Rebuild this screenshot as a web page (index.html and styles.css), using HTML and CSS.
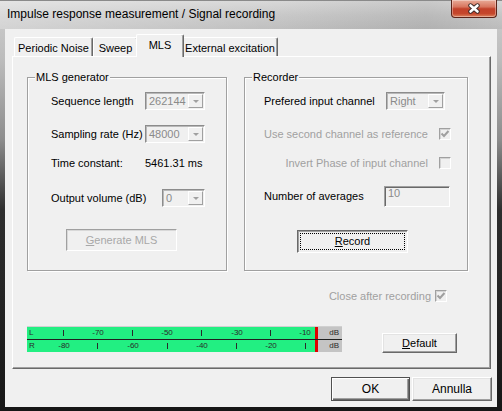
FILE: index.html
```html
<!DOCTYPE html>
<html>
<head>
<meta charset="utf-8">
<title>Impulse response measurement / Signal recording</title>
<link rel="stylesheet" href="styles.css">
</head>
<body>
<div class="window">
  <div class="titlebar">
    <span class="title">Impulse response measurement / Signal recording</span>
    <div class="close">
      <svg width="14" height="11" viewBox="0 0 14 11">
        <path d="M3.5 2.5 L10.5 8.5 M10.5 2.5 L3.5 8.5" stroke="#3a2a28" stroke-width="4.4" stroke-linecap="round" fill="none"/>
        <path d="M3.5 2.5 L10.5 8.5 M10.5 2.5 L3.5 8.5" stroke="#ffffff" stroke-width="2.6" stroke-linecap="round" fill="none"/>
      </svg>
    </div>
  </div>
  <div class="client">
    <div class="tabctl">
      <div class="tabs">
        <div class="tab t1">Periodic Noise</div>
        <div class="tab t2">Sweep</div>
        <div class="tab t3 sel">MLS</div>
        <div class="tab t4">External excitation</div>
      </div>
      <div class="panel">
        <div class="groups">
          <div class="group gen">
            <span class="legend">MLS generator</span>
            <div class="grid gen-grid">
              <div class="row">
                <span class="lbl w94">Sequence length</span>
                <div class="combo w60"><span class="val">262144</span><span class="arrow"></span></div>
              </div>
              <div class="row">
                <span class="lbl w94">Sampling rate (Hz)</span>
                <div class="combo w60"><span class="val">48000</span><span class="arrow"></span></div>
              </div>
              <div class="row">
                <span class="lbl w94">Time constant:</span>
                <span class="lbl">5461.31 ms</span>
              </div>
              <div class="row">
                <span class="lbl w111">Output volume (dB)</span>
                <div class="combo w43"><span class="val">0</span><span class="arrow"></span></div>
              </div>
              <div class="row">
                <div class="btn btn-gen disabled"><span><u>G</u>enerate MLS</span></div>
              </div>
            </div>
          </div>
          <div class="group rec">
            <span class="legend">Recorder</span>
            <div class="grid rec-grid">
              <div class="row">
                <span class="lbl w122">Prefered input channel</span>
                <div class="combo w59"><span class="val">Right</span><span class="arrow"></span></div>
              </div>
              <div class="row end">
                <span class="lbl dis">Use second channel as reference</span>
                <span class="chk">
                  <svg width="10" height="10" viewBox="0 0 10 10"><path d="M1.5 4.5 L4 7 L8.5 2" stroke="#a0a0a0" stroke-width="2" fill="none"/></svg>
                </span>
              </div>
              <div class="row end">
                <span class="lbl dis">Invert Phase of input channel</span>
                <span class="chk"></span>
              </div>
              <div class="row tall">
                <span class="lbl w120">Number of averages</span>
                <div class="edit"><span>10</span></div>
              </div>
              <div class="row">
                <div class="btn btn-rec"><span class="focus"><u>R</u>ecord</span></div>
              </div>
            </div>
          </div>
        </div>
        <div class="closerow">
          <span class="lbl dis">Close after recording</span>
          <span class="chk">
            <svg width="10" height="10" viewBox="0 0 10 10"><path d="M1.5 4.5 L4 7 L8.5 2" stroke="#a0a0a0" stroke-width="2" fill="none"/></svg>
          </span>
        </div>
        <div class="meterrow">
          <div class="meter">
            <div class="mrow">
              <div class="scale">
                <span class="ch">L</span>
                <i class="tick" style="left:36px"></i>
                <span class="num" style="left:71px">-70</span>
                <i class="tick" style="left:105px"></i>
                <span class="num" style="left:140px">-50</span>
                <i class="tick" style="left:174px"></i>
                <span class="num" style="left:210px">-30</span>
                <i class="tick" style="left:243px"></i>
                <span class="num" style="left:278px">-10</span>
              </div>
              <div class="peak"></div>
              <div class="unit">dB</div>
            </div>
            <div class="msep"></div>
            <div class="mrow">
              <div class="scale">
                <span class="ch">R</span>
                <span class="num" style="left:37px">-80</span>
                <i class="tick" style="left:70px"></i>
                <span class="num" style="left:106px">-60</span>
                <i class="tick" style="left:140px"></i>
                <span class="num" style="left:175px">-40</span>
                <i class="tick" style="left:209px"></i>
                <span class="num" style="left:244px">-20</span>
                <i class="tick" style="left:278px"></i>
              </div>
              <div class="peak"></div>
              <div class="unit">dB</div>
            </div>
          </div>
          <div class="btn btn-def"><span><u>D</u>efault</span></div>
        </div>
      </div>
    </div>
    <div class="dlgbtns">
      <div class="btn btn-ok"><span>OK</span></div>
      <div class="btn btn-cancel"><span>Annulla</span></div>
    </div>
  </div>
</div>
</body>
</html>
```
FILE: styles.css
```css
* { box-sizing: border-box; }
html, body { margin: 0; padding: 0; }
body {
  width: 502px;
  height: 411px;
  overflow: hidden;
  background: #1a1a1a;
  font-family: "Liberation Sans", Arial, sans-serif;
  font-size: 11px;
  color: #000;
}
.window {
  width: 502px;
  height: 411px;
  display: flex;
  flex-direction: column;
  background: linear-gradient(to bottom, #cfcfcf 0, #bcbcbc 60px, #8c8c8c 140px, #2e2e2e 210px, #161616 411px);
}
.titlebar {
  height: 29px;
  display: flex;
  justify-content: space-between;
  align-items: flex-start;
  background:
    linear-gradient(to right, rgba(255,255,255,0.35) 0, rgba(255,255,255,0.05) 55%, rgba(0,0,0,0.06) 85%, rgba(255,255,255,0) 100%),
    linear-gradient(to bottom, #d6d6d6 0, #c6c6c6 50%, #bcbcbc 100%);
  border-top: 1px solid #8a8a8a;
}
.title {
  padding-left: 7px;
  line-height: 27px;
  font-size: 12px;
  color: #000;
}
.close {
  width: 46px;
  height: 18px;
  margin-top: -1px;
  margin-right: 5px;
  border: 1px solid #5b2419;
  border-top: none;
  border-radius: 0 0 4px 4px;
  background: linear-gradient(to bottom, #e9ab98 0, #d8765f 40%, #c2412a 52%, #c5472c 80%, #dc8560 100%);
  box-shadow: inset 0 0 0 1px rgba(255,255,255,0.35);
  display: flex;
  align-items: center;
  justify-content: center;
}
.client {
  height: 378px;
  margin: 0 5px 0 5px;
  background: #f0f0f0;
  display: flex;
  flex-direction: column;
}
.tabctl {
  margin: 5px 0 0 7px;
  width: 479px;
}
.tabs {
  display: flex;
  align-items: flex-end;
  height: 22px;
  padding-left: 2px;
  position: relative;
  z-index: 1;
}
.tab {
  height: 19px;
  background: #f0f0f0;
  border: 1px solid;
  border-color: #ffffff #696969 transparent #ffffff;
  border-bottom: none;
  border-radius: 2px 2px 0 0;
  box-shadow: inset -1px 0 0 #a0a0a0;
  display: flex;
  align-items: center;
  justify-content: center;
  padding-top: 1px;
}
.t1 { width: 79px; }
.t2 { width: 45px; }
.t3 { width: 48px; }
.t4 { width: 96px; }
.tab.sel {
  height: 23px;
  margin: 0 -2px -1px -2px;
  position: relative;
  z-index: 2;
  padding-top: 0;
  padding-bottom: 3px;
}
.panel {
  height: 313px;
  border: 1px solid;
  border-color: #ffffff #696969 #696969 #ffffff;
  box-shadow: inset -1px -1px 0 #a0a0a0;
  padding: 20px 0 0 14px;
}
.groups {
  display: flex;
  gap: 17px;
}
.group {
  height: 194px;
  border: 1px solid #a0a0a0;
  box-shadow: 1px 1px 0 #ffffff, inset 1px 1px 0 #ffffff;
}
.gen { width: 200px; padding-left: 23px; }
.rec { width: 224px; padding-left: 19px; }
.legend {
  display: block;
  width: fit-content;
  height: 14px;
  line-height: 14px;
  margin: -8px 0 0 -16px;
  padding: 0 1px;
  background: #f0f0f0;
}
.rec .legend { margin-left: -12px; }
.grid {
  display: grid;
  margin-top: 8px;
}
.gen-grid { grid-template-rows: 33px 29px 35px 42px auto; }
.rec-grid { grid-template-rows: 33px 29px 32px 46px auto; }
.row {
  height: 18px;
  display: flex;
  align-items: center;
}
.row.tall { height: 21px; }
.row.end { justify-content: flex-end; padding-right: 18px; }
.lbl { line-height: 13px; white-space: nowrap; }
.w94 { width: 94px; }
.w111 { width: 111px; }
.w120 { width: 120px; }
.w122 { width: 122px; }
.dis { color: #a0a0a0; margin-right: 11px; }
.combo {
  height: 18px;
  display: flex;
  border: 1px solid;
  border-color: #8c8c8c #ffffff #ffffff #8c8c8c;
  box-shadow: inset 1px 1px 0 #b8b8b8;
  background: #f0f0f0;
}
.w60 { width: 60px; }
.w59 { width: 59px; }
.w43 { width: 43px; }
.val {
  flex: 1;
  color: #8a8a8a;
  padding-left: 3px;
  line-height: 16px;
}
.arrow {
  width: 15px;
  margin: 1px 1px 1px 0;
  border: 1px solid;
  border-color: #ffffff #a0a0a0 #a0a0a0 #ffffff;
  display: flex;
  align-items: center;
  justify-content: center;
}
.arrow::after {
  content: "";
  border-top: 3px solid #a0a0a0;
  border-left: 3px solid transparent;
  border-right: 3px solid transparent;
}
.chk {
  width: 12px;
  height: 12px;
  border: 1px solid;
  border-color: #a0a0a0 #ffffff #ffffff #a0a0a0;
  box-shadow: inset 1px 1px 0 #d4d4d4;
  background: #f0f0f0;
  display: flex;
  align-items: center;
  justify-content: center;
}
.edit {
  width: 66px;
  height: 21px;
  border: 1px solid;
  border-color: #a0a0a0 #ffffff #ffffff #a0a0a0;
  box-shadow: inset 1px 1px 0 #696969;
  background: #f0f0f0;
  color: #8a8a8a;
  padding: 0 0 0 3px;
  line-height: 13px;
}
.btn {
  display: flex;
  align-items: center;
  justify-content: center;
  background: #f0f0f0;
  border: 1px solid;
  border-color: #ffffff #696969 #696969 #ffffff;
  box-shadow: inset -1px -1px 0 #a0a0a0, inset 1px 1px 0 #e3e3e3;
  line-height: 13px;
}
.btn-gen {
  width: 111px;
  height: 22px;
  margin-left: 15px;
  border-color: #a0a0a0 #ffffff #ffffff #a0a0a0;
  box-shadow: inset 1px 1px 0 #d8d8d8;
  color: #a8a8a8;
}
.btn-rec {
  width: 111px;
  height: 23px;
  margin-left: 33px;
  margin-top: 1px;
  padding: 2px;
  border-color: #696969 #ffffff #ffffff #696969;
  box-shadow: inset 1px 1px 0 #a0a0a0;
}
.focus {
  flex: 1;
  align-self: stretch;
  border: 1px dotted #000;
  display: flex;
  align-items: center;
  justify-content: center;
}
.closerow {
  margin-top: 18px;
  height: 14px;
  display: flex;
  align-items: center;
  justify-content: flex-end;
  padding-right: 43px;
}
.closerow .dis { margin-right: 4px; }
.meterrow {
  margin-top: 23px;
  display: flex;
  align-items: flex-start;
}
.meter {
  width: 315px;
  height: 26px;
  border-top: 1px solid #d0d0d0;
  display: flex;
  flex-direction: column;
}
.mrow {
  height: 12px;
  display: flex;
}
.msep { height: 1px; background: #202020; }
.scale {
  width: 288px;
  position: relative;
  background: #22ef82;
  color: #2a2a2a;
  font-size: 8px;
  line-height: 12px;
}
.ch { position: absolute; left: 2px; top: 0; }
.num { position: absolute; top: 0; transform: translateX(-50%); }
.tick {
  position: absolute;
  top: 3px;
  width: 1px;
  height: 6px;
  background: #2a2a2a;
}
.peak { width: 3px; background: #e00000; }
.unit {
  flex: 1;
  background: #c4c4c4;
  color: #2a2a2a;
  font-size: 8px;
  line-height: 12px;
  text-align: right;
  padding-right: 3px;
}
.btn-def {
  width: 75px;
  height: 20px;
  margin: 7px 0 0 40px;
}
.dlgbtns {
  display: flex;
  justify-content: flex-end;
  gap: 2px;
  margin-top: 8px;
  padding-right: 5px;
}
.btn-ok, .btn-cancel { height: 24px; font-size: 12px; }
.btn-ok {
  width: 79px;
  border: 1px solid #505050;
  box-shadow: inset 1px 1px 0 #ffffff, inset -1px -1px 0 #696969, inset -2px -2px 0 #a0a0a0;
}
.btn-cancel { width: 80px; }
```
